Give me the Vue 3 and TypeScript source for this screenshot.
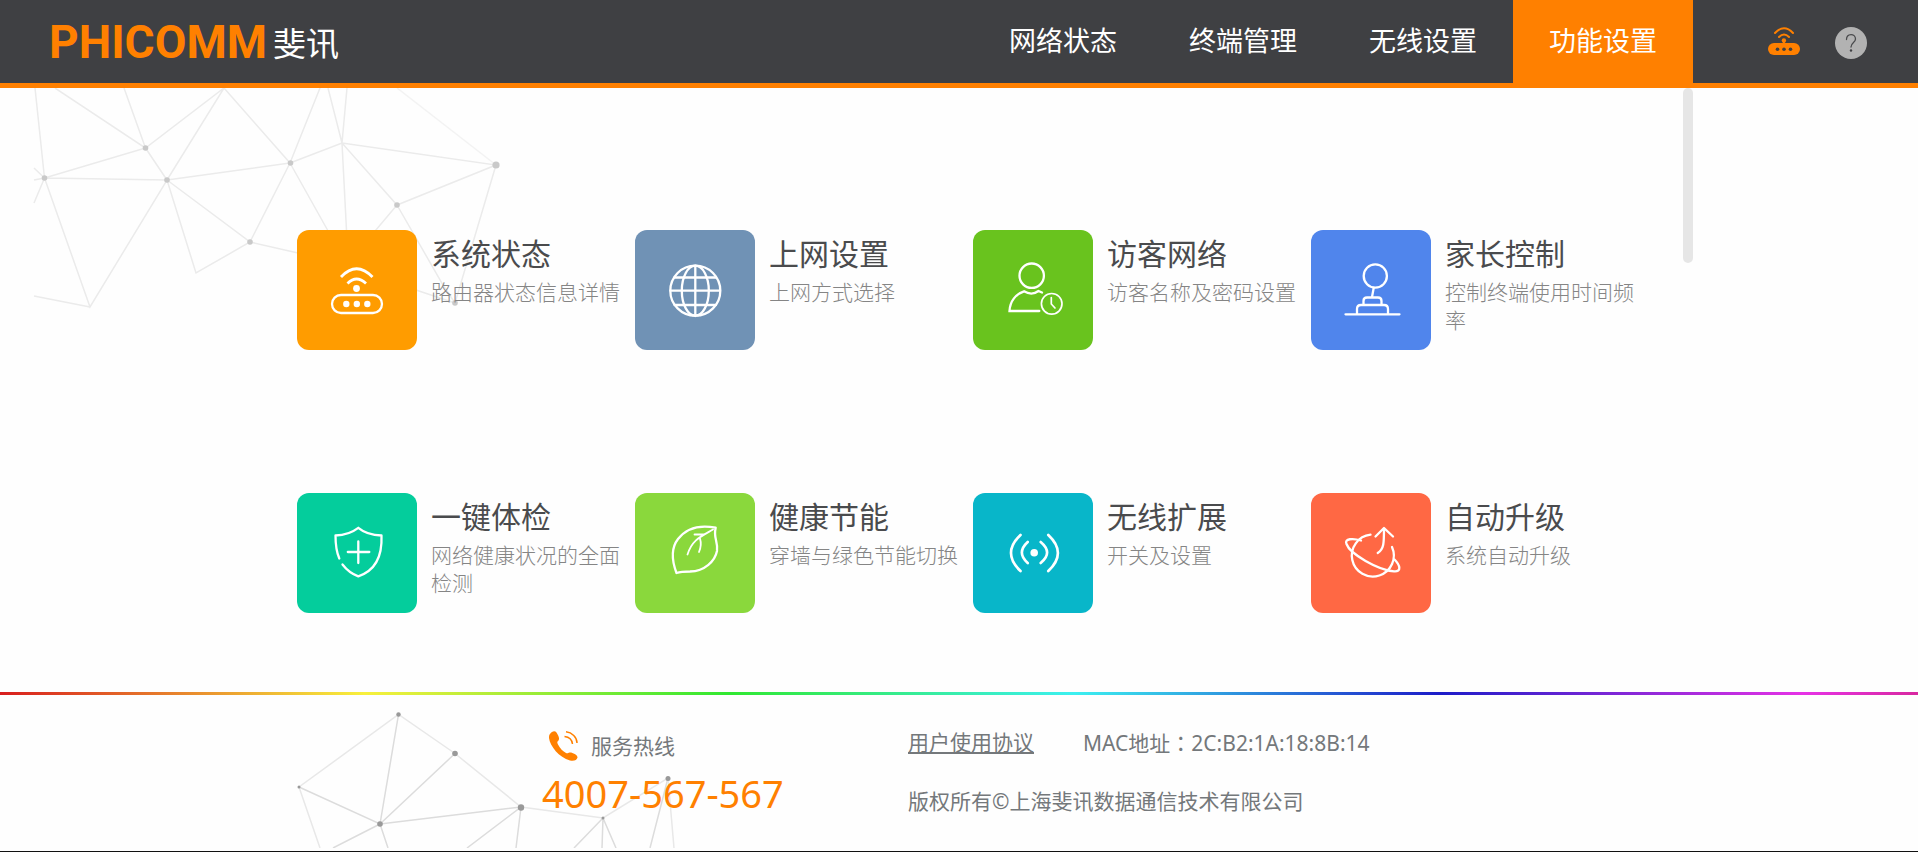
<script setup lang="ts">
import { ref } from 'vue'

interface Feature {
  id: string
  title: string
  desc: string
}

const tabs: string[] = ['网络状态', '终端管理', '无线设置', '功能设置']
const activeTab = ref<string>('功能设置')

const features: Feature[] = [
  { id: 'system', title: '系统状态', desc: '路由器状态信息详情' },
  { id: 'wan', title: '上网设置', desc: '上网方式选择' },
  { id: 'guest', title: '访客网络', desc: '访客名称及密码设置' },
  { id: 'parental', title: '家长控制', desc: '控制终端使用时间频率' },
  { id: 'check', title: '一键体检', desc: '网络健康状况的全面检测' },
  { id: 'saving', title: '健康节能', desc: '穿墙与绿色节能切换' },
  { id: 'extend', title: '无线扩展', desc: '开关及设置' },
  { id: 'upgrade', title: '自动升级', desc: '系统自动升级' },
]
</script>

<template>
  <div class="page">
    <header class="header">
      <a class="logo" href="#">
        <span class="logo-mark">PHICOMM</span>
        <span class="logo-name">斐讯</span>
      </a>
      <nav class="nav">
        <a
          v-for="tab in tabs"
          :key="tab"
          href="#"
          class="tab"
          :class="{ active: tab === activeTab }"
          @click.prevent="activeTab = tab"
        >{{ tab }}</a>
      </nav>
      <div class="tools">
        <button class="tool" type="button" aria-label="路由器">
          <svg width="32" height="32" viewBox="0 0 32 32">
            <rect x="0" y="16" width="32" height="12" rx="6" fill="#ff8000" />
            <g fill="#3f4043">
              <circle cx="9.5" cy="22.300" r="1.800" />
              <circle cx="16" cy="22.300" r="1.800" />
              <circle cx="22.500" cy="22.300" r="1.800" />
            </g>
            <path d="M15.900 13.500V17" stroke="#ff8000" stroke-width="2" />
            <circle cx="15.900" cy="13.500" r="2.200" fill="#ff8000" />
            <g fill="none" stroke="#ff8000" stroke-width="2" stroke-linecap="round">
              <path d="M11 10Q16 5 21 10" />
              <path d="M7 6Q16 -3.500 25 6" />
            </g>
          </svg>
        </button>
        <button class="tool" type="button" aria-label="帮助">
          <svg width="32" height="32" viewBox="0 0 32 32">
            <circle cx="16" cy="16" r="16" fill="#b2b2b2" />
            <path d="M11.500 12.500C11.500 6 20.500 6 20.500 12C20.500 15.500 16 15.500 16 20" fill="none" stroke="#4a4b4d" stroke-width="1.300" stroke-linecap="round" />
            <circle cx="16" cy="23.500" r="1.200" fill="#3f4043" />
          </svg>
        </button>
      </div>
    </header>

    <main class="main">
      <svg class="mesh mesh-top" width="500" height="230" viewBox="0 88 500 230" aria-hidden="true">
        <g fill="none" stroke="#ebebeb" stroke-width="1.500">
          <path d="M35 88L44.500 178L145.500 148L55 88M124 88L145.500 148L224 88L167 180L145.500 148M44.500 178L167 180L290 163L224 88M290 163L320 88M328 88L342 143L347 88" />
          <path d="M290 163L342 143L496 165L397 205L342 143L347 240M397 205L370 237M167 180L196 273L250 242L167 180L90 307L44.500 178M290 163L250 242L298 253M290 163L332 238" />
          <path d="M397 205L443 285L455 303L416 290M496 165L455 303M90 307L34 296M34 203L44.500 178L34 180M34 168L44.500 178" />
          <path d="M397 88L496 165" stroke="#f3f3f3" />
        </g>
        <g fill="#c9c9c9">
          <circle cx="44.500" cy="178" r="2.800" />
          <circle cx="145.500" cy="148" r="2.800" />
          <circle cx="167" cy="180" r="2.800" />
          <circle cx="290.500" cy="163" r="2.800" />
          <circle cx="250" cy="242" r="2.800" />
          <circle cx="397" cy="205" r="2.800" />
          <circle cx="496" cy="165" r="3.600" />
          <circle cx="455" cy="303" r="2.800" />
        </g>
      </svg>

      <div class="content">
        <div class="scrollbar"></div>
        <a v-for="item in features" :key="item.id" class="card" href="#">
          <span class="tile" :class="item.id">
            <svg viewBox="0 0 120 120" fill="none" stroke="#fff" stroke-width="2.300" stroke-linecap="round" stroke-linejoin="round">
              <template v-if="item.id === 'system'">
                <rect x="35" y="65" width="50" height="18" rx="9" />
                <g fill="#fff" stroke="none">
                  <circle cx="49.300" cy="74" r="3.200" />
                  <circle cx="59.800" cy="74" r="3.200" />
                  <circle cx="70.300" cy="74" r="3.200" />
                  <circle cx="59.500" cy="58.500" r="3.400" />
                </g>
                <path d="M50.500 53.500Q59.500 44.500 69 53.500M44 47Q59.500 30.500 75.500 47" stroke-width="2.800" stroke-linecap="butt" />
              </template>
              <template v-else-if="item.id === 'wan'">
                <circle cx="60.300" cy="60.700" r="25" />
                <ellipse cx="60.300" cy="60.700" rx="13.500" ry="25" />
                <path d="M60.300 36V86M35.500 60.700H85M39.500 47.500H81M39.500 75H81" />
              </template>
              <template v-else-if="item.id === 'guest'">
                <circle cx="58.700" cy="45.700" r="12.200" />
                <path d="M66.300 81H36.500C37 71 43 64 51 61.300Q58.700 66 65.500 61L69 62.500" stroke-linejoin="miter" />
                <circle cx="78.700" cy="73.800" r="10.300" stroke-width="1.700" />
                <path d="M78.300 67.500V74L82 78" stroke-width="1.700" />
              </template>
              <template v-else-if="item.id === 'parental'">
                <circle cx="64.300" cy="46" r="11.600" />
                <path d="M62.700 58L61 67M52.500 75V71Q52.500 67.500 56 67.500H67Q70.500 67.500 70.500 71V75M46 84V79Q46 75 50 75H73Q77 75 77 79V84M34.500 84.300H88.500" />
              </template>
              <template v-else-if="item.id === 'check'">
                <path d="M42.300 65.500C39 58 38.500 50 38.500 42.500Q52 42 61.300 34.800Q70 42 84.500 42.500C85.500 66 77 78 61.300 83.300Q52 80 45.500 71.500M50.800 59H72.300M61.300 48.500V70" />
              </template>
              <template v-else-if="item.id === 'saving'">
                <path d="M80.700 34.700C62 31 50 37 43 46C36 55 37 68 41.500 80Q46 78.500 55 78.500C70 78 80 68 82 58C83.500 49 78 45 80.700 34.700Z" />
                <path d="M78 36.500C65 44 57 47 52.500 61.500M59.500 41.500H69M65 45.500Q67 52 64 59" stroke-width="1.800" />
              </template>
              <template v-else-if="item.id === 'extend'">
                <circle cx="61.200" cy="59.700" r="3.800" fill="#fff" stroke="none" />
                <path d="M54.700 49Q43 59.700 54.700 70M67.700 49Q80.500 59.700 67.700 70M47.500 42Q28.500 60 47.500 78M75.300 42Q94.500 60 75.300 78" stroke-width="2.700" />
              </template>
              <template v-else>
                <path d="M59.500 41.700A21 21 0 1 0 81 54" />
                <path d="M50 47.500C42 45 33 45.500 35.500 51C39 61 67 77 83 78.300C91 79 89 72 83.500 66.500" />
                <path d="M66.700 60C73 56 73 50 73 35.500M64.500 43.500L73 35L82 43.500" />
              </template>
            </svg>
          </span>
          <span class="text">
            <span class="title">{{ item.title }}</span>
            <span class="desc">{{ item.desc }}</span>
          </span>
        </a>
      </div>
    </main>

    <footer class="footer">
      <div class="rainbow"></div>
      <svg class="mesh mesh-bottom" width="700" height="156" viewBox="0 692 700 156" aria-hidden="true">
        <g fill="none" stroke="#dcdcdc" stroke-width="1.500">
          <path d="M299 787L380 824L398.500 714.500M380 824L455 753.500M380 824L521 807L467 848M380 824L333 848M380 824L388 848M521 807L516 848M603 818L574 848M603 818L602 848M603 818L616 848M668 778L650 848" />
          <path d="M320 848L299 787L398.500 714.500L455 753.500L521 807L603 818L668 778L674 848" stroke="#e8e8e8" />
        </g>
        <g fill="#999">
          <circle cx="398.500" cy="714.500" r="2.200" />
          <circle cx="455" cy="753.500" r="2.800" />
          <circle cx="380" cy="824" r="2.800" />
          <circle cx="521" cy="807.500" r="3.200" />
          <circle cx="668" cy="778.500" r="2.500" />
          <circle cx="603" cy="818" r="1.500" />
          <circle cx="299" cy="787" r="1.500" />
        </g>
      </svg>
      <div class="footer-inner">
        <div class="hotline">
          <div class="hotline-label">
            <svg width="29" height="30" viewBox="0 0 29 30" aria-hidden="true">
              <path d="M1 3C3 0 6 -0.500 7.500 1.500C9 4 11 7 9.500 9.500C8 11 8 11.500 9 13.500C11 17.500 14 20.500 17 22C18.500 22.500 19 22 20.500 21.500C23 21 29 24 28.500 26.500C28 29 25 30.500 21 29.500C10 26.500 1 15 0 7C0 5 0 4 1 3Z" fill="#ff8000" />
              <path d="M17 0.800C23 1.500 28 6 28 12M15.500 5.500C20 6 23 8.500 23.500 13" fill="none" stroke="#ff8000" stroke-width="1.500" />
            </svg>
            <span>服务热线</span>
          </div>
          <div class="phone">4007-567-567</div>
        </div>
        <div class="legal">
          <div class="legal-row">
            <a class="agreement" href="#">用户使用协议</a>
            <span>MAC地址<span class="colon">：</span>2C:B2:1A:18:8B:14</span>
          </div>
          <div class="legal-row">版权所有©上海斐讯数据通信技术有限公司</div>
        </div>
      </div>
    </footer>
  </div>
</template>

<style>
body {
  margin: 0;
  background: #fefefe;
}
</style>

<style scoped>
.page {
  display: flex;
  flex-direction: column;
  min-height: 100vh;
  overflow: hidden;
  box-sizing: border-box;
  border-bottom: 1px solid #111;
  font-family: "Noto Sans", "Noto Sans CJK SC", sans-serif;
}

a {
  color: inherit;
  text-decoration: none;
}

.header {
  display: flex;
  height: 88px;
  background: linear-gradient(#3f4043 83px, #ff8000 83px);
  color: #fff;
}

.logo {
  display: flex;
  gap: 6px;
  padding-left: 49px;
}

.logo-mark {
  font: 700 46px/84px Roboto, sans-serif;
  color: #ff8000;
}

.logo-name {
  font-size: 33px;
  line-height: 88px;
}

.nav {
  display: flex;
  margin-left: auto;
}

.tab {
  padding: 0 36px;
  font-size: 27px;
  line-height: 82px;
}

.tab.active {
  background: #ff8000;
}

.tools {
  display: flex;
  align-items: flex-start;
  gap: 35px;
  padding: 27px 51px 0 75px;
}

.tool {
  width: 32px;
  height: 32px;
  padding: 0;
  border: 0;
  background: none;
  cursor: pointer;
}

.tool svg {
  display: block;
}

.main {
  position: relative;
  flex: 1;
}

.mesh {
  position: absolute;
  left: 0;
  top: 0;
}

.content {
  position: relative;
  display: grid;
  grid-template-columns: repeat(4, 1fr);
  row-gap: 143px;
  box-sizing: border-box;
  max-width: 1468px;
  margin: 0 auto;
  padding: 142px 44px 79px 72px;
}

.scrollbar {
  position: absolute;
  top: 0;
  right: 0;
  width: 10px;
  height: 175px;
  border-radius: 5px;
  background: #e6e6e6;
}

.card {
  display: flex;
  gap: 14px;
  height: 120px;
}

.tile {
  flex: none;
  width: 120px;
  height: 120px;
  border-radius: 12px;
}

.tile svg {
  display: block;
}

.system { background: #ff9c00; }
.wan { background: #7092b5; }
.guest { background: #69c31e; }
.parental { background: #5085ec; }
.check { background: #04cd9c; }
.saving { background: #8ad83c; }
.extend { background: #08b6c9; }
.upgrade { background: #ff6844; }

.text {
  display: flex;
  flex-direction: column;
  gap: 4px;
  padding-top: 4px;
}

.title {
  font-size: 30px;
  line-height: 40px;
  color: #4a4b4d;
}

.desc {
  font-size: 21px;
  line-height: 28px;
  font-weight: 300;
  color: #858585;
}

.footer {
  position: relative;
  color: #74787b;
  font-size: 21px;
}

.rainbow {
  height: 3px;
  background: linear-gradient(90deg, #d81e1e, #f8f03c 19%, #30e830 38%, #3cf0f0 56%, #1c1cc8 75%, #e632e6 94%, #d828a0);
}

.footer-inner {
  position: relative;
  display: flex;
  box-sizing: border-box;
  max-width: 1468px;
  margin: 0 auto;
  padding-left: 317px;
}

.hotline {
  width: 366px;
  padding: 35px 0 27px;
}

.hotline-label {
  display: flex;
  align-items: center;
  gap: 13px;
  height: 32px;
  padding-left: 7px;
  line-height: 28px;
}

.phone {
  font-size: 38px;
  line-height: 62px;
  color: #ff8000;
}

.legal {
  display: flex;
  flex-direction: column;
  gap: 28px;
  padding-top: 32px;
}

.legal-row {
  display: flex;
  gap: 49px;
  line-height: 30px;
}

.agreement {
  text-decoration: underline;
}

.colon {
  font-family: "Noto Sans CJK TC", sans-serif;
}
</style>
